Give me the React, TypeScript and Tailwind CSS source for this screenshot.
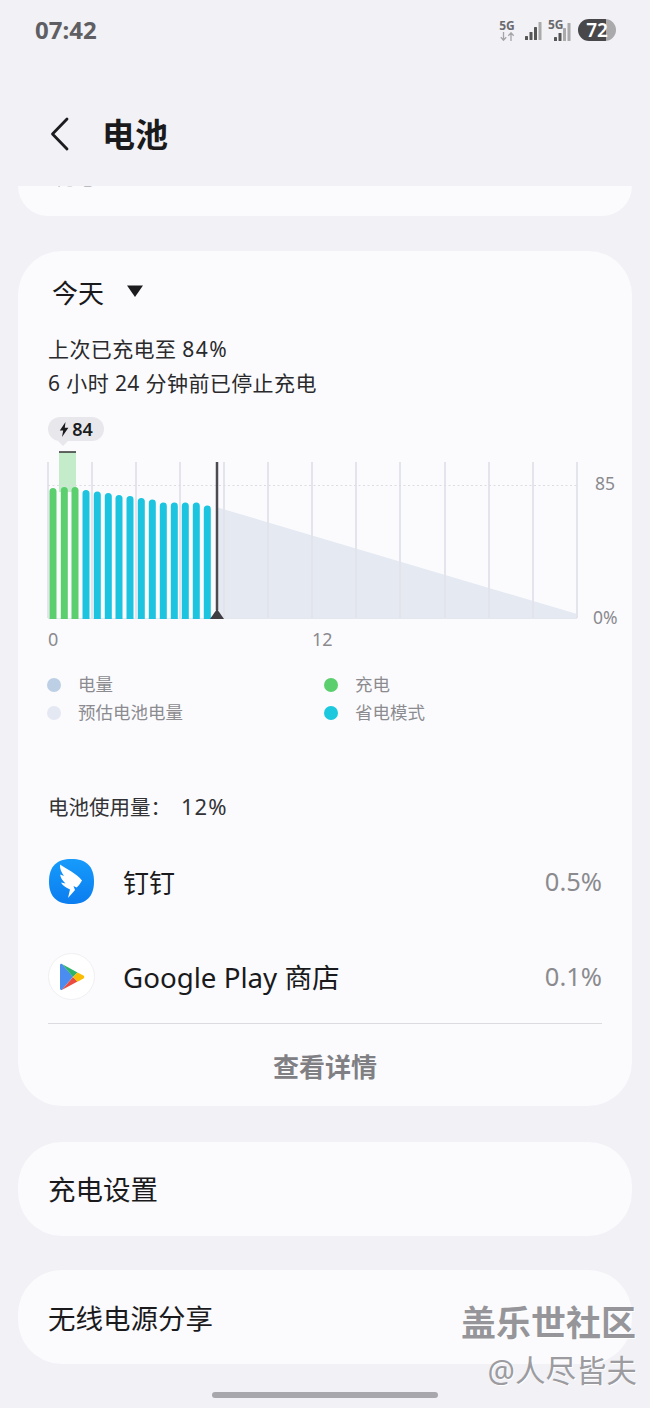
const FONT = "font-['Noto_Sans','Noto_Sans_CJK_SC',sans-serif]";

function Signal({ strong = 4 }: { strong?: number }) {
  const xs = [0, 4.5, 9, 13.5];
  const hs = [4, 8, 13, 18];
  return (
    <svg width="18" height="18" viewBox="0 0 18 18" className="block">
      {xs.map((x, i) => (
        <rect key={x} x={x} y={18 - hs[i]} width="3" height={hs[i]} rx="0.6" fill={i < strong ? "#555" : "#aaa"} />
      ))}
    </svg>
  );
}

function StatusBar() {
  return (
    <div className="h-[60px] flex items-center justify-between pl-[35px] pr-[34px]">
      <span className="text-[24px] font-bold text-[#5f5f63] leading-none">07:42</span>
      <div className="flex items-center">
        <div className="flex flex-col items-center w-[16px]">
          <span className="text-[12px] font-bold text-[#6a6a6e] leading-[12px]">5G</span>
          <svg width="15" height="9" viewBox="0 0 15 9" className="block">
            <path d="M3.5 0v8M0.8 5.2l2.7 3 2.7-3M11 9V1M8.3 3.8L11 .8l2.7 3" fill="none" stroke="#a5a5a8" strokeWidth="1.3" />
          </svg>
        </div>
        <div className="ml-[10px] mt-[2px]"><Signal strong={3} /></div>
        <div className="relative ml-[5px] w-[24px] h-[22px]">
          <span className="absolute left-0 top-0 text-[12px] font-bold text-[#6a6a6e] leading-[12px]">5G</span>
          <div className="absolute right-0 bottom-0"><Signal strong={2} /></div>
        </div>
        <div className="ml-[6px] w-[38px] h-[22px] rounded-full bg-[linear-gradient(90deg,#48484b_28px,#aaaaad_28px)] flex items-center justify-center">
          <span className="text-[19px] font-semibold text-white leading-none">72</span>
        </div>
      </div>
    </div>
  );
}

function Header() {
  return (
    <div className="h-[126px] pt-[22px] flex items-center pl-[50px]">
      <svg width="20" height="34" viewBox="0 0 20 34" className="block">
        <path d="M17 2L2.5 17L17 32" fill="none" stroke="#1c1c1e" strokeWidth="2.8" strokeLinecap="round" strokeLinejoin="round" />
      </svg>
      <span className="ml-[32px] text-[33px] font-bold text-[#1a1a1c] leading-none">电池</span>
    </div>
  );
}

const BARS: [number, number, string][] = [
  [53, 488, "#5bcf6e"], [64.3, 487, "#5bcf6e"], [75, 487, "#5bcf6e"],
  [86, 490, "#1cc4e0"], [97.3, 491.5, "#1cc4e0"], [108.3, 493, "#1cc4e0"],
  [119, 495, "#1cc4e0"], [130, 496, "#1cc4e0"], [141.3, 498, "#1cc4e0"],
  [152.3, 499.5, "#1cc4e0"], [163.3, 502.5, "#1cc4e0"], [174.3, 502.5, "#1cc4e0"],
  [185.3, 502.5, "#1cc4e0"], [196.3, 502.5, "#1cc4e0"], [207.3, 505.5, "#1cc4e0"],
];
const GRID = [48, 92, 136, 180, 224, 268, 312, 356, 400, 445, 489, 533, 577];

function Chart() {
  // svg origin maps to page (40, 448)
  const ox = 40;
  const oy = 448;
  return (
    <div className="relative h-[203px] ml-[22px]">
      <svg width="560" height="180" viewBox="0 0 560 180" className="absolute left-0 top-[31px] block">
        <g transform={`translate(${-ox} ${-oy})`}>
          <rect x="59" y="452" width="17" height="40" fill="#c4ecca" />
          <path d="M59 452H76" stroke="#333" strokeWidth="1.5" />
          <path d="M216 507L577 614V618H216Z" fill="#e4e9f2" />
          {GRID.map((x) => (
            <path key={x} d={`M${x} 462V618`} stroke="#e1e3ea" strokeWidth="1.8" />
          ))}
          <path d="M48 485.5H577" stroke="#dcdce2" strokeWidth="1" strokeDasharray="2 2.5" />
          <path d="M48 618.5H577" stroke="#e4e7ee" strokeWidth="1" />
          {BARS.map(([x, top, c]) => (
            <path key={x} d={`M${x - 3.5} 619V${top + 3.5}A3.5 3.5 0 0 1 ${x + 3.5} ${top + 3.5}V619Z`} fill={c} />
          ))}
          <path d="M217 462V610" stroke="#4b4b50" strokeWidth="2.5" />
          <path d="M210 619L217 609L224 619Z" fill="#3d3d42" />
        </g>
      </svg>
      <div className="absolute left-[8px] top-0 w-[56px] h-[24px] rounded-full bg-[#e8e8ec] flex items-center justify-center gap-[3px]">
        <svg width="10" height="15" viewBox="0 0 10 15" className="block">
          <path d="M6.5 0L0.8 8.4H4.2L3 15L9.4 5.8H5.8Z" fill="#1c1c1e" />
        </svg>
        <span className="text-[18px] font-semibold text-[#1c1c1e] leading-none">84</span>
      </div>
      <div className="absolute left-[18px] top-[24px] w-0 h-0 border-x-[5px] border-x-transparent border-t-[5px] border-t-[#e8e8ec]" />
      <span className="absolute left-[555px] top-[58px] text-[17.5px] text-[#8a8a8e] leading-none">85</span>
      <span className="absolute left-[553px] top-[192px] text-[17.5px] text-[#8a8a8e] leading-none">0%</span>
    </div>
  );
}

function Legend() {
  const Item = ({ c, t }: { c: string; t: string }) => (
    <div className="h-[28px] flex items-center">
      <span className="w-[14px] h-[14px] rounded-full" style={{ background: c }} />
      <span className="ml-[17px] text-[17.5px] text-[#8c8c90] leading-none">{t}</span>
    </div>
  );
  return (
    <div className="grid grid-cols-[277px_1fr] ml-[29px] mt-[51px]">
      <Item c="#bdcfe4" t="电量" />
      <Item c="#5bcf6e" t="充电" />
      <Item c="#e4e8f2" t="预估电池电量" />
      <Item c="#1cc8de" t="省电模式" />
    </div>
  );
}

function DingIcon() {
  return (
    <svg width="45" height="45" viewBox="0 0 45 45" className="block">
      <defs>
        <linearGradient id="ding" x1="0" y1="0" x2="0" y2="1">
          <stop offset="0" stopColor="#169bfb" />
          <stop offset="1" stopColor="#0b7df0" />
        </linearGradient>
      </defs>
      <path d="M22.5 0C37 0 45 7 45 22.5S37 45 22.5 45S0 38 0 22.5S8 0 22.5 0Z" fill="url(#ding)" />
      <path d="M11 5.5C18 10.5 27 14 33 21.5C31 25 29.5 27 27.5 28.5L24.5 27L26 31L19 39L21 30.5C16 28.5 13 25.5 12 23.5L16.5 24.5C13.5 21.5 11.5 19 11.2 15.5L15 17C12 13 10.8 9.5 11 5.5Z" fill="#fff" />
    </svg>
  );
}

function PlayIcon() {
  return (
    <div className="w-[47px] h-[47px] rounded-full bg-white border border-[#f0f0f3] flex items-center justify-center ml-[-1px]">
      <svg width="26" height="28" viewBox="0 0 26 28" className="block">
        <path d="M1 2.2C1 1 2 .4 3 1L14 13.8L2.8 27C1.8 27.4 1 26.6 1 25.6Z" fill="#4b8cf0" />
        <path d="M3 1L18.5 9.6L14 14Z" fill="#2fb36b" />
        <path d="M2.8 27L14 14L18.5 18.6Z" fill="#ea4c3f" />
        <path d="M18.5 9.4L24.4 12.6C25.6 13.4 25.6 14.7 24.4 15.4L18.5 18.8L14 14Z" fill="#fbbc05" />
      </svg>
    </div>
  );
}

function AppRow({ icon, name, value, size, h }: { icon: React.ReactNode; name: string; value: string; size: string; h: string }) {
  return (
    <div className={`flex items-center ${h}`}>
      <div className="w-[75px] pl-[1px] mb-[2px] shrink-0">{icon}</div>
      <span className={`${size} text-[#1a1a1c] leading-none flex-1`}>{name}</span>
      <span className="text-[25.5px] text-[#8b8b8f] leading-none mb-[1px]">{value}</span>
    </div>
  );
}

function MainCard() {
  return (
    <div className="mt-[35px] mx-[18px] h-[855px] rounded-[44px] bg-[#fbfbfe] flex flex-col">
      <div className="h-[84px] pl-[34px] flex items-center">
        <span className="text-[26px] text-[#1a1a1c] leading-none">今天</span>
        <svg width="18" height="14" viewBox="0 0 18 14" className="block ml-[22px] mb-[4px]">
          <path d="M1 1.5H17L9 13Z" fill="#1c1c1e" />
        </svg>
      </div>
      <div className="pl-[30px] text-[21px] text-[#2a2a2c] leading-[34px] tracking-[0.4px] mt-[-3px]">
        <div>上次已充电至 <span className="tracking-[1.5px]">84%</span></div>
        <div>6 小时 24 分钟前已停止充电</div>
      </div>
      <div className="mt-[17px]">
        <Chart />
      </div>
      <div className="relative h-0">
        <span className="absolute left-[30px] top-[10px] text-[18px] text-[#8a8a8e] leading-none">0</span>
        <span className="absolute left-[294px] top-[10px] text-[18px] text-[#8a8a8e] leading-none">12</span>
      </div>
      <Legend />
      <div className="mt-[68px] ml-[30px] text-[20.5px] text-[#333336] leading-none">
        电池使用量：<span className="ml-[10px] text-[22px] tracking-[1px]">12%</span>
      </div>
      <div className="mx-[30px] mt-[18px] flex flex-col">
        <AppRow icon={<DingIcon />} name="钉钉" value="0.5%" size="text-[26px]" h="h-[94px]" />
        <AppRow icon={<PlayIcon />} name="Google Play 商店" value="0.1%" size="text-[27.7px]" h="h-[96px]" />
        <div className="h-px bg-[#dcdce0] mt-[-3px]" />
      </div>
      <div className="flex-1 flex items-center justify-center pt-[4px]">
        <span className="text-[26px] font-bold text-[#808084] leading-none">查看详情</span>
      </div>
    </div>
  );
}

function SimpleCard({ text, mt, pt }: { text: string; mt: string; pt: string }) {
  return (
    <div className={`${mt} ${pt} mx-[18px] h-[94px] rounded-[44px] bg-[#fbfbfe] flex items-center pl-[30px]`}>
      <span className="text-[27.5px] text-[#1a1a1c] leading-none">{text}</span>
    </div>
  );
}

export default function App() {
  return (
    <div className={`${FONT} relative w-[650px] h-[1408px] overflow-hidden bg-[#f1f1f6] flex flex-col`}>
      <StatusBar />
      <Header />
      <div className="mx-[18px] h-[30px] rounded-b-[40px] bg-[#fbfbfe] overflow-hidden relative">
        <span className="absolute left-[36px] top-[-18px] text-[20px] text-[#8a8a8e] leading-none">耗电</span>
      </div>
      <MainCard />
      <SimpleCard text="充电设置" mt="mt-[36px]" pt="pt-[2px]" />
      <SimpleCard text="无线电源分享" mt="mt-[34px]" pt="pt-[3px]" />
      <div className="absolute left-[212px] top-[1392px] w-[226px] h-[6px] rounded-full bg-[#a8a8ac]" />
      <span className="absolute right-[14px] top-[1305px] text-[35px] font-semibold text-[#96969a] leading-none [text-shadow:1px_1px_1px_#fff]">盖乐世社区</span>
      <span className="absolute right-[13px] top-[1355px] text-[30.5px] text-[#9c9ca0] leading-none [text-shadow:1px_1px_1px_#fff]">@人尽皆夫</span>
    </div>
  );
}
